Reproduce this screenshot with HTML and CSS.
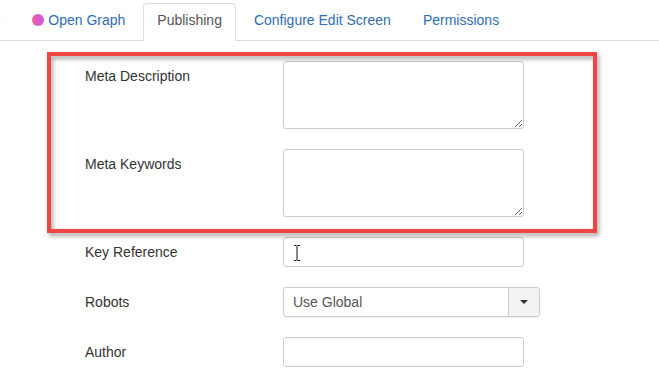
FILE: index.html
```html
<!DOCTYPE html>
<html lang="en">

<head>
    <meta charset="UTF-8">
    <meta name="viewport" content="width=device-width, initial-scale=1.0">
    <title>Edit Article - Publishing</title>
    <link rel="stylesheet" href="styles.css">
</head>

<body>
    <ul class="nav-tabs">
        <li><a href="#">Options</a></li>
        <li><a href="#"><span class="og-dot"></span>Open Graph</a></li>
        <li class="active"><a href="#">Publishing</a></li>
        <li><a href="#">Configure Edit Screen</a></li>
        <li><a href="#">Permissions</a></li>
    </ul>
    <main class="tab-content">
        <div class="control-group">
            <label class="control-label" for="metadesc">Meta Description</label>
            <textarea id="metadesc" class="field-area"></textarea>
        </div>
        <div class="control-group">
            <label class="control-label" for="metakey">Meta Keywords</label>
            <textarea id="metakey" class="field-area"></textarea>
        </div>
        <div class="control-group">
            <label class="control-label" for="xreference">Key Reference</label>
            <div class="field-wrap">
                <input id="xreference" class="field-input" type="text">
                <svg class="ibeam" width="8" height="16" viewBox="0 0 8 16">
                    <path d="M1 0.5h2.5M4.5 0.5h2.5M4 1v14M1 15.5h2.5M4.5 15.5h2.5" stroke="#111" stroke-width="1" fill="none"/>
                </svg>
            </div>
        </div>
        <div class="control-group">
            <label class="control-label" for="robots">Robots</label>
            <div class="select-box" id="robots">
                <span class="select-value">Use Global</span>
                <span class="select-btn"><span class="caret"></span></span>
            </div>
        </div>
        <div class="control-group">
            <label class="control-label" for="author">Author</label>
            <input id="author" class="field-input" type="text">
        </div>
        <!-- annotation drawn over the meta fields -->
        <div class="highlight"></div>
    </main>
</body>

</html>
```

FILE: styles.css
```css
body {
    font-family: "Liberation Sans", Arial, sans-serif;
    color: #333;
    background: #fff;
    margin: 0;
    padding: 0;
    overflow: hidden;
}

*,
*:before,
*:after {
    box-sizing: border-box;
}

.nav-tabs {
    display: flex;
    list-style: none;
    margin: 0 0 0 -62px;
    padding: 3px 0 0 0;
    border-bottom: 1px solid #ddd;
}

.nav-tabs li {
    margin-right: 4px;
    margin-bottom: -1px;
}

.nav-tabs a {
    display: flex;
    align-items: center;
    padding: 6px 13px 10px;
    font-size: 14px;
    line-height: 20px;
    color: #2f6db5;
    text-decoration: none;
    white-space: nowrap;
    border: 1px solid transparent;
    border-radius: 4px 4px 0 0;
}

.nav-tabs .active a {
    color: #555;
    background-color: #fff;
    border-color: #ddd #ddd transparent;
}

.og-dot {
    width: 12px;
    height: 12px;
    margin-right: 4px;
    border-radius: 50%;
    background: linear-gradient(90deg, #f7609a, #c657f5);
}

.tab-content {
    position: relative;
    padding: 20px 0 0 85px;
}

.control-group {
    display: flex;
    margin-bottom: 20px;
}

.control-label {
    width: 198px;
    padding-top: 5px;
    font-size: 14px;
    line-height: 20px;
    color: #333;
}

.field-area {
    display: block;
    width: 241px;
    height: 68px;
    margin: 0;
    border: 1px solid #ccc;
    border-radius: 3px;
    resize: vertical;
    font-family: inherit;
}

.field-wrap {
    position: relative;
}

.field-input {
    display: block;
    width: 241px;
    height: 30px;
    margin: 0;
    border: 1px solid #ccc;
    border-radius: 3px;
    font-family: inherit;
}

.ibeam {
    position: absolute;
    left: 10px;
    top: 8px;
}

.select-box {
    display: flex;
    width: 257px;
    height: 30px;
    border: 1px solid #ccc;
    border-radius: 3px;
    box-shadow: 0 1px 2px rgba(0, 0, 0, 0.06);
}

.select-value {
    flex: 1;
    padding-left: 9px;
    font-size: 14px;
    line-height: 28px;
    color: #555;
}

.select-btn {
    display: flex;
    align-items: center;
    justify-content: center;
    width: 31px;
    background-color: #f3f3f3;
    border-left: 1px solid #ccc;
    border-radius: 0 3px 3px 0;
}

.caret {
    width: 0;
    height: 0;
    border-left: 4px solid transparent;
    border-right: 4px solid transparent;
    border-top: 4px solid #333;
}

.highlight {
    position: absolute;
    left: 47px;
    top: 11px;
    width: 550px;
    height: 181px;
    border: 4px solid #f04545;
    filter: drop-shadow(2px 3px 2px rgba(0, 0, 0, 0.35));
    pointer-events: none;
}
```
